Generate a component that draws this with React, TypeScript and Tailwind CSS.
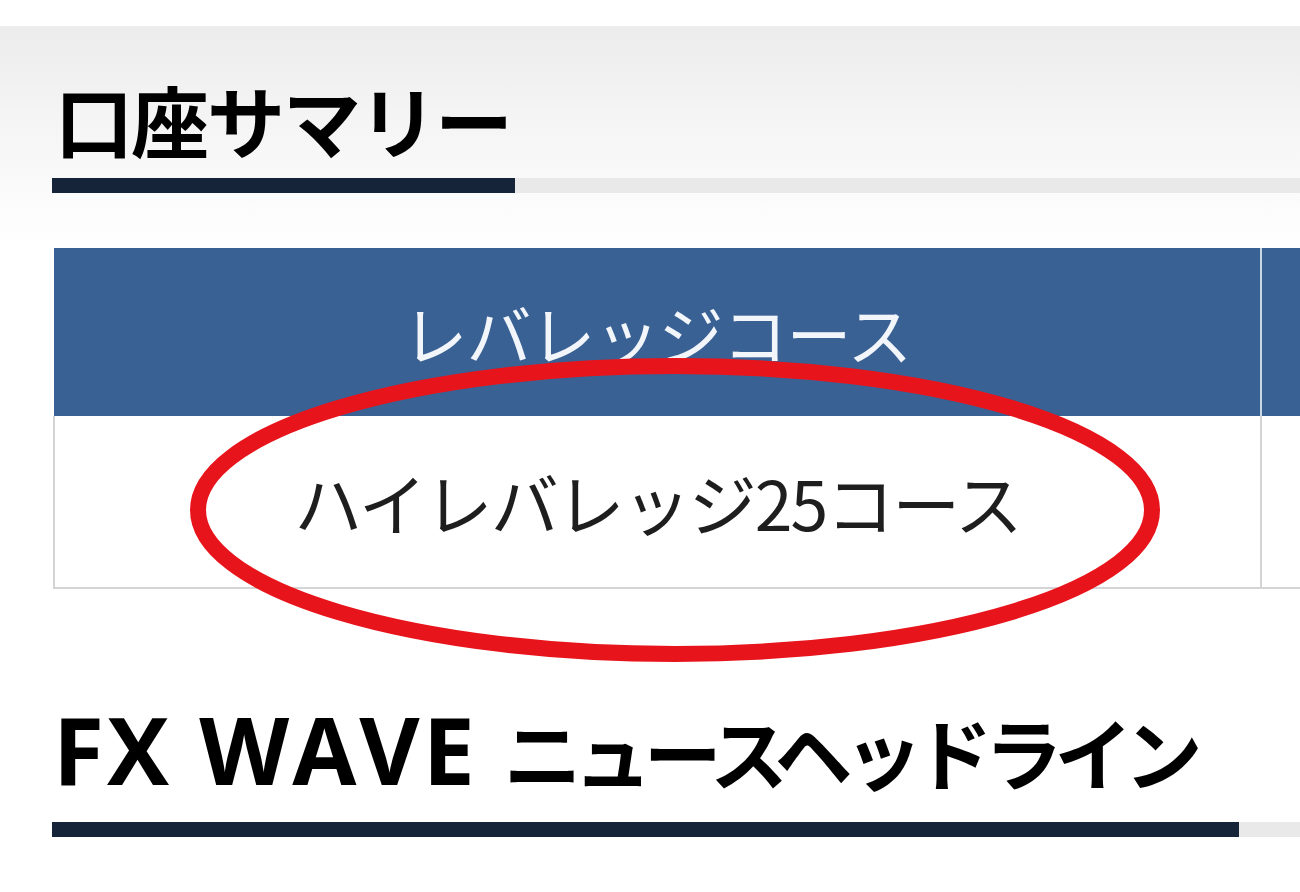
import React from "react";

const jp = { fontFamily: '"Noto Sans CJK JP", "Noto Sans", sans-serif' };
const latin = { fontFamily: '"Open Sans", "Noto Sans", sans-serif' };

function Underline({ bar }: { bar: string }) {
  return (
    <div className="flex h-[15px]">
      <div className={`${bar} h-full bg-[#16243a]`} />
      <div className="flex-1 h-full bg-[#e9e9e9]" />
    </div>
  );
}

export default function App() {
  return (
    <div className="relative w-[1300px] h-[892px] overflow-hidden bg-white" style={jp}>
      <div className="h-[26px] bg-white" />
      <div className="bg-gradient-to-b from-[#ececec] via-[#f6f6f6] to-[#ffffff] pt-[54px] pb-[55px] pl-[52px]">
        <h2 className="text-[78px] font-bold leading-none text-black tracking-[-2px] pl-[3px]">口座サマリー</h2>
        <div className="mt-[20px]">
          <Underline bar="w-[463px]" />
        </div>
      </div>

      <div className="pl-[53px]">
        <table className="border-collapse w-[1400px] table-fixed">
          <colgroup>
            <col className="w-[1207px]" />
            <col />
          </colgroup>
          <thead>
            <tr className="h-[168px] bg-[#3a6194]">
              <th className="font-normal text-[65px] text-[#f2f6fb] border-r-2 border-[#c9d6e6] leading-none tracking-[-1px]">
                レバレッジコース
              </th>
              <th />
            </tr>
          </thead>
          <tbody>
            <tr className="h-[172px] bg-white">
              <td className="text-center text-[68px] text-[#1e1e1e] border-l-2 border-b-2 border-r-2 border-[#d4d4d4] leading-none tracking-[-2px]">
                ハイレバレッジ25コース
              </td>
              <td className="border-b-2 border-[#d4d4d4]" />
            </tr>
          </tbody>
        </table>
      </div>

      <div className="pt-[114px] pl-[52px]">
        <h2 className="flex items-baseline leading-none text-black font-bold whitespace-nowrap pl-[1px]">
          <span className="text-[93px] tracking-[3px]" style={latin}>FX WAVE</span>
          <span className="text-[78px] tracking-[-8px] ml-[26px]">ニュースヘッドライン</span>
        </h2>
        <div className="mt-[26px]">
          <Underline bar="w-[1187px]" />
        </div>
      </div>

      <svg className="absolute left-0 top-0 pointer-events-none" width="1300" height="892">
        <ellipse cx="675" cy="510" rx="477" ry="144" fill="none" stroke="#e8141c" strokeWidth="16" />
      </svg>
    </div>
  );
}
